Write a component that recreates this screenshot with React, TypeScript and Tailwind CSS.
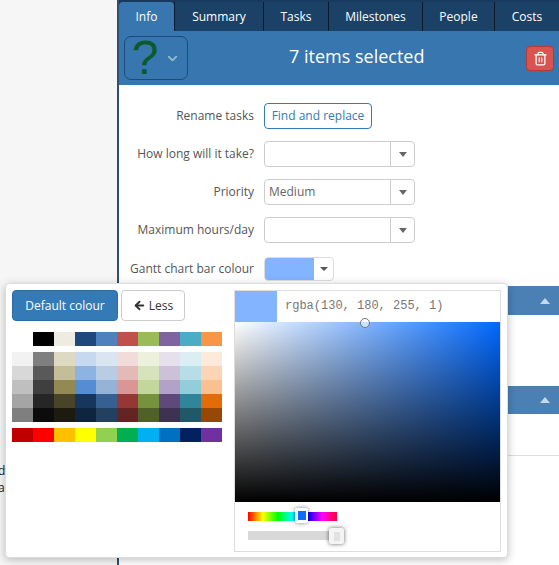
import { ArrowLeft, ChevronDown, Trash2 } from 'lucide-react';

const themeRow = ['transparent', '#000000', '#eeece1', '#1f497d', '#4f81bd', '#c0504d', '#9bbb59', '#8064a2', '#4bacc6', '#f79646'];
const shadeCols = [
  ['#f2f2f2', '#d8d8d8', '#bfbfbf', '#a5a5a5', '#7f7f7f'],
  ['#7f7f7f', '#595959', '#3f3f3f', '#262626', '#0c0c0c'],
  ['#ddd9c3', '#c4bd97', '#938953', '#494429', '#1d1b10'],
  ['#c6d9f0', '#8db3e2', '#548dd4', '#17365d', '#0f243e'],
  ['#dbe5f1', '#b8cce4', '#95b3d7', '#366092', '#244061'],
  ['#f2dcdb', '#e5b9b7', '#d99694', '#953734', '#632423'],
  ['#ebf1dd', '#d7e3bc', '#c3d69b', '#76923c', '#4f6128'],
  ['#e5e0ec', '#ccc1d9', '#b2a2c7', '#5f497a', '#3f3151'],
  ['#dbeef3', '#b7dde8', '#92cddc', '#31859b', '#205867'],
  ['#fdeada', '#fbd5b5', '#fac08f', '#e36c09', '#974806'],
];
const brightRow = ['#c00000', '#ff0000', '#ffc000', '#ffff00', '#92d050', '#00b050', '#00b0f0', '#0070c0', '#002060', '#7030a0'];

const tabs = [
  { label: 'Info', width: 'w-[55px]' },
  { label: 'Summary', width: 'w-[89px]' },
  { label: 'Tasks', width: 'w-[65px]' },
  { label: 'Milestones', width: 'w-[94px]' },
  { label: 'People', width: 'w-[72px]' },
  { label: 'Costs', width: 'w-[65px]' },
];

function FormRow({ label, children, className }: { label: string; children: React.ReactNode; className: string }) {
  return (
    <div className={`flex items-center ${className}`}>
      <div className="w-[145px] pr-[10px] text-right text-[12px] leading-[18px] text-[#555]">{label}</div>
      {children}
    </div>
  );
}

function SelectBox({ value }: { value?: string }) {
  return (
    <div className="flex h-[26px] w-[151px] items-center rounded-[4px] border border-[#ccc] bg-white text-[12px] text-[#666]">
      <div className="flex-1 pl-[4px]">{value}</div>
      <div className="flex h-full w-[24px] items-center justify-center border-l border-[#ccc]">
        <div className="h-0 w-0 border-x-[4px] border-t-[5px] border-x-transparent border-t-[#666]" />
      </div>
    </div>
  );
}

function ColourPopover() {
  return (
    <div className="absolute top-[283px] left-[5px] flex h-[275px] w-[503px] rounded-[4px] border border-[#ddd] bg-white shadow-[0_2px_8px_rgba(0,0,0,0.25)]">
      <div className="flex w-[228px] flex-col pt-[6px] pl-[6px]">
        <div className="flex gap-[3px]">
          <button className="h-[31px] w-[106px] rounded-[4px] border border-[#2e6da4] bg-[#337ab7] text-[12px] text-white">Default colour</button>
          <button className="flex h-[31px] w-[64px] items-center justify-center gap-[3px] rounded-[4px] border border-[#ccc] bg-white text-[12px] text-[#333]">
            <ArrowLeft size={13} strokeWidth={3.5} />
            Less
          </button>
        </div>
        <div className="mt-[11px] flex">
          {themeRow.map((c) => (
            <div key={c} className="h-[14px] w-[21px]" style={{ backgroundColor: c }} />
          ))}
        </div>
        <div className="mt-[6px] flex">
          {shadeCols.map((col) => (
            <div key={col[0] + col[1]} className="flex flex-col">
              {col.map((c) => (
                <div key={c} className="h-[14px] w-[21px]" style={{ backgroundColor: c }} />
              ))}
            </div>
          ))}
        </div>
        <div className="mt-[6px] flex">
          {brightRow.map((c) => (
            <div key={c} className="h-[14px] w-[21px]" style={{ backgroundColor: c }} />
          ))}
        </div>
      </div>
      <div className="mt-[6px] flex h-[262px] w-[267px] flex-col border border-[#ddd]">
        <div className="flex h-[31px] shrink-0">
          <div className="w-[42px] bg-[#82b4ff]" />
          <div className="pt-[7px] pl-[8px] font-['Liberation_Mono',monospace] text-[12px] leading-[16px] text-[#777]">rgba(130, 180, 255, 1)</div>
        </div>
        <div className="relative h-[180px] shrink-0 bg-[linear-gradient(to_top,#000,rgba(0,0,0,0)),linear-gradient(to_right,#fff,#0068ff)]">
          <div className="absolute -top-[4px] left-[125px] h-[10px] w-[10px] rounded-full border border-[#777] bg-white/60" />
        </div>
        <div className="relative flex-1">
          <div className="absolute top-[10px] left-[13px] h-[9px] w-[89px] bg-[linear-gradient(to_right,#f00,#ff0,#0f0,#0ff,#00f,#f0f,#f03)]" />
          <div className="absolute top-[6px] left-[60px] flex h-[15px] w-[13px] items-center justify-center rounded-[2px] bg-white shadow-[0_0_4px_rgba(0,0,0,0.5)]">
            <div className="h-[9px] w-[8px] bg-[#0a6eff]" />
          </div>
          <div className="absolute top-[29px] left-[13px] h-[9px] w-[88px] bg-[#d8d8d8]" />
          <div className="absolute top-[26px] left-[94px] flex h-[16px] w-[15px] items-center justify-center rounded-[2px] bg-[#f4f4f4] shadow-[0_0_4px_rgba(0,0,0,0.6)]">
            <div className="h-[9px] w-[6px] bg-[#e2e2e2]" />
          </div>
        </div>
      </div>
    </div>
  );
}

export default function App() {
  return (
    <div className="relative flex h-[565px] w-[559px] overflow-hidden bg-white font-['Open_Sans',sans-serif]">
      {/* Page behind the panel */}
      <div className="w-[117px] shrink-0 bg-[#f6f6f6] text-[12px] leading-[17px] text-[#222]">
        <div className="mt-[462px] -ml-[2px]">
          <div>di</div>
          <div>a</div>
        </div>
      </div>

      <div className="flex min-w-0 flex-1 flex-col border-l-2 border-[#2c4f73]">
        <div className="flex h-[31px] shrink-0 bg-[#173a5e] pt-[2px]">
          {tabs.map((tab, i) => (
            <div
              key={tab.label}
              className={`flex ${tab.width} items-center justify-center text-[12px] ${
                i === 0 ? 'rounded-t-[4px] bg-[#3776ae] text-white' : 'border-l border-[#0d1a29] bg-[#1b4166] text-white'
              }`}
            >
              {tab.label}
            </div>
          ))}
        </div>

        <div className="relative flex h-[54px] shrink-0 items-center bg-[#3776ae]">
          <div className="ml-[5px] flex h-[44px] w-[64px] items-center rounded-[7px] border border-[#1f4b78]">
            <div className="w-[40px] text-center font-['Liberation_Sans',sans-serif] text-[48px] leading-[44px] text-[#0b5a2b]">?</div>
            <ChevronDown size={15} strokeWidth={3} className="text-[#8fc0c0]" />
          </div>
          <div className="absolute top-[12px] left-[170px] text-[18px] leading-[26px] text-white">7 items selected</div>
          <button className="absolute top-[15px] right-[5px] flex h-[25px] w-[28px] items-center justify-center rounded-[4px] border border-[#b33a36] bg-[#d9534f] text-white">
            <Trash2 size={15} />
          </button>
        </div>

        <div className="relative flex-1">
          <FormRow label="Rename tasks" className="pt-[18px]">
            <button className="h-[26px] w-[108px] rounded-[4px] border border-[#337ab7] bg-white text-[12px] text-[#337ab7]">Find and replace</button>
          </FormRow>
          <FormRow label="How long will it take?" className="pt-[12px]">
            <SelectBox />
          </FormRow>
          <FormRow label="Priority" className="pt-[12px]">
            <SelectBox value="Medium" />
          </FormRow>
          <FormRow label="Maximum hours/day" className="pt-[12px]">
            <SelectBox />
          </FormRow>
          <FormRow label="Gantt chart bar colour" className="pt-[14px]">
            <div className="flex h-[24px] w-[70px] overflow-hidden rounded-[4px] border border-[#ddd]">
              <div className="w-[49px] bg-[#82b4ff]" />
              <div className="flex flex-1 items-center justify-center">
                <div className="h-0 w-0 border-x-[4px] border-t-[4px] border-x-transparent border-t-[#555]" />
              </div>
            </div>
          </FormRow>

          {/* Section headers that stick out from behind the popover */}
          <div className="mt-[5px] flex h-[29px] items-center justify-end bg-[#4a80b4] pr-[9px]">
            <div className="h-0 w-0 border-x-[5px] border-b-[6px] border-x-transparent border-b-[#c3d8ea]" />
          </div>
          <div className="mt-[71px] flex h-[28px] items-center justify-end bg-[#4a80b4] pr-[9px]">
            <div className="h-0 w-0 border-x-[5px] border-b-[6px] border-x-transparent border-b-[#c3d8ea]" />
          </div>
          <div className="mt-[41px] border-t border-[#ddd]" />
        </div>
      </div>

      <ColourPopover />
    </div>
  );
}
